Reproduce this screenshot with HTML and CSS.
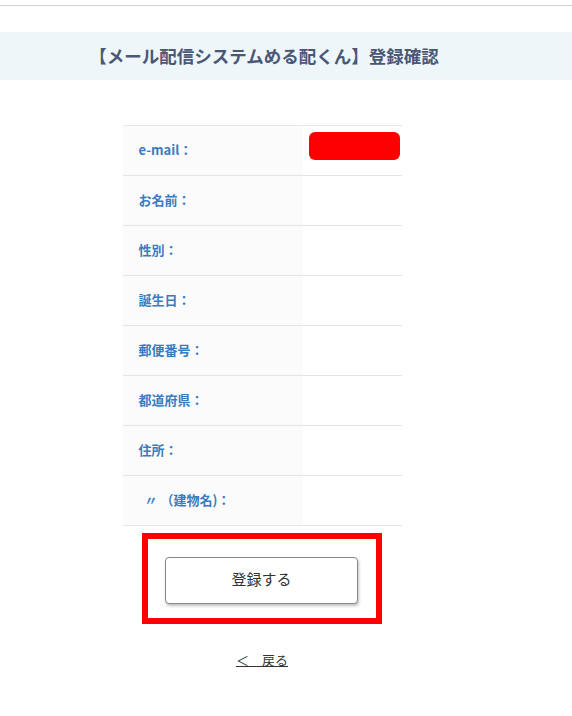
FILE: index.html
```html
<!DOCTYPE html>
<html lang="ja">
<head>
  <meta charset="UTF-8" />
  <meta name="viewport" content="width=device-width, initial-scale=1.0"/>
  <title>登録確認</title>
  <link rel="stylesheet" href="styles.css">
</head>
<body>

  <div class="top-bar"></div>

  <div class="page-title">
    <div class="inner">
      <h1>【メール配信システムめる配くん】登録確認</h1>
    </div>
  </div>

  <div class="inner">
    <table class="confirm-table">
      <tr>
        <th>e-mail：</th>
        <td class="email-cell"><span class="masked"></span></td>
      </tr>
      <tr>
        <th>お名前：</th>
        <td></td>
      </tr>
      <tr>
        <th>性別：</th>
        <td></td>
      </tr>
      <tr>
        <th>誕生日：</th>
        <td></td>
      </tr>
      <tr>
        <th>郵便番号：</th>
        <td></td>
      </tr>
      <tr>
        <th>都道府県：</th>
        <td></td>
      </tr>
      <tr>
        <th>住所：</th>
        <td></td>
      </tr>
      <tr>
        <th class="sub-label">〃 （建物名)：</th>
        <td></td>
      </tr>
    </table>

    <div class="submit-box">
      <button class="submit-btn">登録する</button>
    </div>

    <div class="back">
      <a href="#">＜　戻る</a>
    </div>
  </div>

</body>
</html>
```

FILE: styles.css
```css
* {
  box-sizing: border-box;
}

body {
  margin: 0;
  font-family: "Noto Sans CJK JP", "Noto Sans", sans-serif;
  color: #333;
  background: #fff;
}

.top-bar {
  height: 6px;
  border-bottom: 1px solid #d0d0d0;
}

.inner {
  width: 524px;
}

.page-title {
  margin-top: 26px;
  background: #eef6fa;
  height: 48px;
}

.page-title h1 {
  margin: 0;
  height: 48px;
  line-height: 48px;
  text-align: center;
  font-size: 17.5px;
  font-weight: bold;
  color: #4a5876;
  padding-left: 4px;
}

.confirm-table {
  width: 279px;
  margin: 45px auto 0;
  border-collapse: collapse;
  border-top: 1px solid #e8e8e8;
}

.confirm-table th,
.confirm-table td {
  height: 50px;
  border-bottom: 1px solid #e4e4e4;
  padding: 0;
  vertical-align: middle;
}

.confirm-table th {
  width: 180px;
  background: #fbfbfb;
  text-align: left;
  padding: 0 0 3px 16px;
  font-size: 13px;
  font-weight: bold;
  color: #3a7cbf;
}

.confirm-table th.sub-label {
  padding-left: 22px;
}

.confirm-table td {
  text-align: right;
  padding-right: 2px;
}

.confirm-table td.email-cell {
  vertical-align: top;
  padding-top: 6px;
}

.masked {
  display: inline-block;
  width: 91px;
  height: 28px;
  background: #ff0000;
  border-radius: 6px;
  vertical-align: top;
}

.submit-box {
  width: 240px;
  height: 91px;
  margin: 7px auto 0;
  border: 6px solid #ff0000;
  padding: 18px 0 0 17px;
}

.submit-btn {
  width: 193px;
  height: 47px;
  padding: 0 0 5px;
  background: #fff;
  border: 1px solid #888;
  border-radius: 4px;
  box-shadow: 1px 2px 3px rgba(0,0,0,0.25);
  font-family: "Noto Sans CJK JP", sans-serif;
  font-size: 15px;
  color: #333;
  cursor: pointer;
}

.back {
  text-align: center;
  margin-top: 22px;
}

.back a {
  color: #333;
  font-size: 13px;
  text-decoration: underline;
}
```
